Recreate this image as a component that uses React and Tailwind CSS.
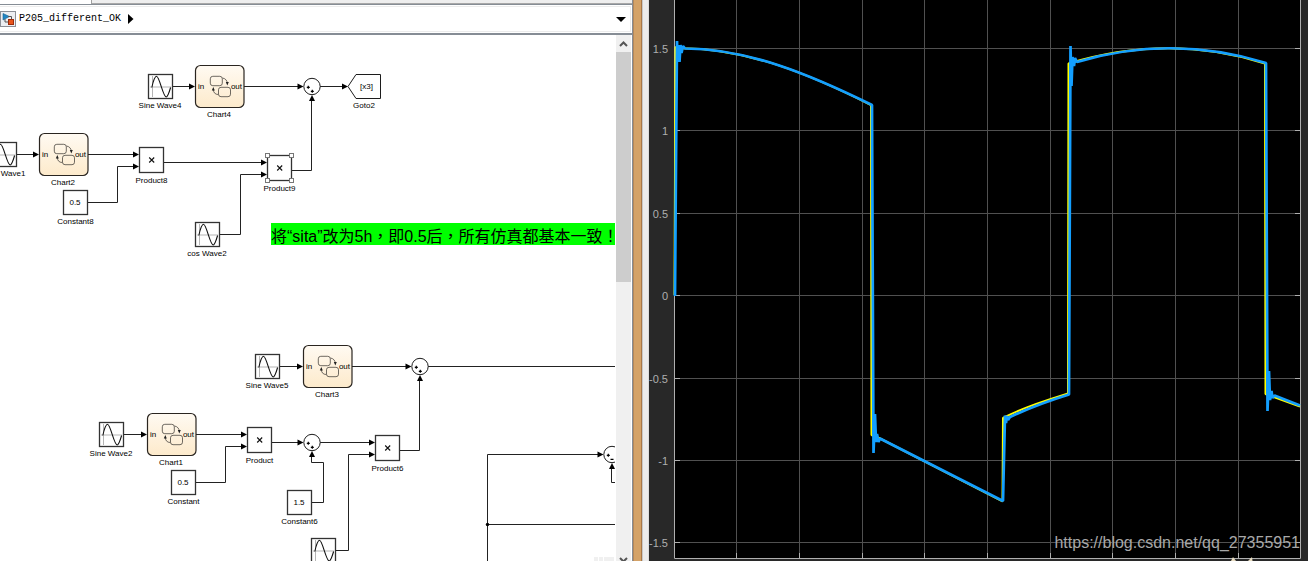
import { clsx } from "clsx";

const sineBlocks = [
  { x: 148, y: 74, label: "Sine Wave4" },
  { x: -8, y: 142, label: "Sine Wave1" },
  { x: 195, y: 222, label: "cos Wave2" },
  { x: 255, y: 354, label: "Sine Wave5" },
  { x: 99, y: 422, label: "Sine Wave2" },
  { x: 311, y: 538 },
];

const chartBlocks = [
  { x: 195, y: 65, label: "Chart4" },
  { x: 39, y: 133, label: "Chart2" },
  { x: 303, y: 345, label: "Chart3" },
  { x: 147, y: 413, label: "Chart1" },
];

const productBlocks = [
  { x: 139, y: 147, label: "Product8" },
  { x: 267, y: 155, label: "Product9", selected: true },
  { x: 247, y: 427, label: "Product" },
  { x: 375, y: 435, label: "Product6" },
];

const constantBlocks = [
  { x: 63, y: 190, value: "0.5", label: "Constant8" },
  { x: 171, y: 470, value: "0.5", label: "Constant" },
  { x: 287, y: 490, value: "1.5", label: "Constant6" },
];

const sumBlocks = [
  { x: 312, y: 86.5 },
  { x: 420, y: 366.5 },
  { x: 312, y: 442.5 },
  { x: 612, y: 454.5, minus: true },
];

// dir is the direction of the arrow head, placed on the last point
const wires = [
  { d: "M172 86.5H190", tip: [195, 86.5], dir: "right" },
  { d: "M244 86.5H298", tip: [303.5, 86.5], dir: "right" },
  { d: "M320 86.5H342", tip: [348, 86.5], dir: "right" },
  { d: "M16 154.5H34", tip: [39, 154.5], dir: "right" },
  { d: "M88 154.5H134", tip: [139, 154.5], dir: "right" },
  { d: "M88 202.5H117.5V166.5H134", tip: [139, 166.5], dir: "right" },
  { d: "M164 162.5H262", tip: [267, 162.5], dir: "right" },
  { d: "M220 234.5H240.5V174.5H262", tip: [267, 174.5], dir: "right" },
  { d: "M292 170.5H311.5V100", tip: [312, 95], dir: "up" },
  { d: "M280 366.5H298", tip: [303, 366.5], dir: "right" },
  { d: "M352 366.5H406", tip: [411.5, 366.5], dir: "right" },
  { d: "M428 366.5H615" },
  { d: "M124 434.5H142", tip: [147, 434.5], dir: "right" },
  { d: "M196 434.5H242", tip: [247, 434.5], dir: "right" },
  { d: "M196 482.5H225.5V446.5H242", tip: [247, 446.5], dir: "right" },
  { d: "M272 442.5H298", tip: [303.5, 442.5], dir: "right" },
  { d: "M312 502.5H323.5V462.5H311.5V456", tip: [312, 451], dir: "up" },
  { d: "M320 442.5H370", tip: [375, 442.5], dir: "right" },
  { d: "M336 550.5H348.5V454.5H370", tip: [375, 454.5], dir: "right" },
  { d: "M400 450.5H419.5V380", tip: [420, 375], dir: "up" },
  { d: "M487.5 561V454.5H598", tip: [603.5, 454.5], dir: "right" },
  { d: "M487 524.5H615" },
  { d: "M615 482.5H611.5V468", tip: [612, 463], dir: "up" },
];

const labelClass =
  "fill-black text-[8px] font-['Liberation_Sans',Arial,sans-serif]";

const Label = ({ x, y, children, anchor = "middle" }) => (
  <text x={x} y={y} textAnchor={anchor} className={labelClass}>
    {children}
  </text>
);

const ArrowHead = ({ tip, dir }) => {
  const [x, y] = tip;
  const points =
    dir === "right"
      ? `${x},${y} ${x - 6},${y - 3} ${x - 6},${y + 3}`
      : `${x},${y} ${x - 3},${y + 6} ${x + 3},${y + 6}`;
  return <polygon points={points} className="fill-black" />;
};

const SineBlock = ({ x, y, label }) => (
  <g transform={`translate(${x} ${y})`}>
    <rect x="0.5" y="0.5" width="24" height="24" fill="#fff" stroke="#333" strokeWidth="1.3" />
    <path d="M4.5 2V23M2 13H23" stroke="#b5b5b5" fill="none" />
    <path
      d="M3.8 13.5C5.5 6 7 2.3 8.5 2.3C11.5 2.3 15 23 18.2 23C19.8 23 21 19 22.6 13.5"
      stroke="#111"
      strokeWidth="1.1"
      fill="none"
    />
    {label && <Label x={12} y={34}>{label}</Label>}
  </g>
);

const ChartBlock = ({ x, y, label }) => (
  <g transform={`translate(${x} ${y})`}>
    <rect
      x="0.5"
      y="0.5"
      width="48.5"
      height="42"
      rx="5"
      fill="url(#chartFill)"
      stroke="#2a2520"
      strokeWidth="1.2"
    />
    <g fill="none" stroke="#4a4640" strokeWidth="0.8">
      <rect x="15.3" y="11.3" width="12" height="9.4" rx="2.5" />
      <rect x="23.5" y="22.3" width="12" height="9.4" rx="2.5" />
      <path d="M27.5 13C30.5 13.5 32 15.5 32.3 18" />
      <path d="M23.3 29.5C20 29.5 18.5 27.5 18.3 24.5" />
    </g>
    <path d="M30.8 17H33.8L32.3 20.6ZM16.8 25.6H19.8L18.3 22Z" fill="#222" />
    <Label x={3} y={24} anchor="start">in</Label>
    <Label x={47} y={24} anchor="end">out</Label>
    <Label x={24} y={52}>{label}</Label>
  </g>
);

const ProductBlock = ({ x, y, label, selected }) => (
  <g transform={`translate(${x} ${y})`}>
    <rect x="0.5" y="0.5" width="24" height="25" fill="#fff" stroke="#333" strokeWidth="1.3" />
    <path d="M10.2 10.5L15.2 15.5M15.2 10.5L10.2 15.5" stroke="#111" strokeWidth="1.1" />
    {selected && (
      <g fill="#fff" stroke="#777">
        <rect x="-1.5" y="-1.5" width="4" height="4" />
        <rect x="22.5" y="-1.5" width="4" height="4" />
        <rect x="-1.5" y="23.5" width="4" height="4" />
        <rect x="22.5" y="23.5" width="4" height="4" />
      </g>
    )}
    <Label x={12.5} y={36}>{label}</Label>
  </g>
);

const ConstantBlock = ({ x, y, value, label }) => (
  <g transform={`translate(${x} ${y})`}>
    <rect x="0.5" y="0.5" width="24" height="24" fill="#fff" stroke="#333" strokeWidth="1.3" />
    <Label x={12} y={15}>{value}</Label>
    <Label x={12.5} y={34}>{label}</Label>
  </g>
);

const SumBlock = ({ x, y, minus }) => (
  <g transform={`translate(${x} ${y})`}>
    <circle r="8.2" fill="#fff" stroke="#1c1c1c" />
    <path
      d={
        minus
          ? "M-5.2 0.8H-2.2M-3.7 -0.7V2.3M-1.5 4.8H1.5"
          : "M-5.2 0.8H-2.2M-3.7 -0.7V2.3M-1.2 4.8H1.8M0.3 3.3V6.3"
      }
      stroke="#000"
      strokeWidth="1.2"
    />
  </g>
);

const Diagram = () => (
  <svg width="615" height="526" viewBox="0 35 615 526" className="block max-w-none">
    <defs>
      <linearGradient id="chartFill" x1="0" y1="0" x2="0" y2="1">
        <stop offset="0" stopColor="#fffaf2" />
        <stop offset="1" stopColor="#fdeacb" />
      </linearGradient>
    </defs>
    {wires.map((wire) => (
      <path key={wire.d} d={wire.d} fill="none" stroke="#222" />
    ))}
    {sineBlocks.map((block) => (
      <SineBlock key={`${block.x}-${block.y}`} {...block} />
    ))}
    {chartBlocks.map((block) => (
      <ChartBlock key={block.label} {...block} />
    ))}
    {productBlocks.map((block) => (
      <ProductBlock key={block.label} {...block} />
    ))}
    {constantBlocks.map((block) => (
      <ConstantBlock key={block.label} {...block} />
    ))}
    {sumBlocks.map((block) => (
      <SumBlock key={`${block.x}-${block.y}`} {...block} />
    ))}
    {wires
      .filter((wire) => wire.tip)
      .map((wire) => (
        <ArrowHead key={wire.d} tip={wire.tip} dir={wire.dir} />
      ))}
    <polygon
      points="348,86.5 356,74.5 380.5,74.5 380.5,98.5 356,98.5"
      fill="#fff"
      stroke="#1c1c1c"
    />
    <Label x={366.5} y={89}>[x3]</Label>
    <Label x={364} y={108}>Goto2</Label>
    <circle cx="487.5" cy="524.5" r="1.7" />
    <path d="M594 557h4v4h-4zM599 557h4v4h-4zM604 557h10v4h-10z" fill="#f0f0f0" />
  </svg>
);

const Chevron = ({ up }) => (
  <svg width="9" height="6" viewBox="0 0 9 6" className="block shrink-0">
    <path
      d={up ? "M1 5L4.5 1.5L8 5" : "M1 1L4.5 4.5L8 1"}
      fill="none"
      stroke="#555"
      strokeWidth="2"
    />
  </svg>
);

const ModelWindow = () => (
  <section className="flex min-w-0 flex-col overflow-hidden border-r border-[#868d95] bg-white">
    <div className="flex h-[5px] shrink-0 border-b border-[#868d95]">
      <div className="w-[92px] border-r border-[#a0a0a0] bg-white" />
      <div className="flex-1 border-b border-[#a8a8a8] bg-[#eeeeee]" />
    </div>

    {/* Breadcrumb bar */}
    <div className="flex h-7 shrink-0 p-px pl-0">
      <div className="flex flex-1 items-center justify-between border-y border-r border-[#ececec] pr-1">
        <a href="#model" className="flex items-center gap-[3px]">
          <svg width="16" height="16" viewBox="0 0 16 16" className="block">
            <rect x="0.5" y="0.5" width="15" height="15" fill="#eceef2" stroke="#8c8f96" />
            <path d="M3 2.5L9.5 5.5L3 9Z" fill="#2186c4" stroke="#17638f" strokeWidth="0.6" />
            <path d="M8 5.5H11.5V8.5M5 8V11H9" fill="none" stroke="#555" />
            <rect x="8.5" y="8.5" width="5" height="5" fill="#e8541c" stroke="#9c2c0c" />
          </svg>
          <span className="font-['Liberation_Mono','Courier_New',monospace] text-[10px] leading-4 text-black">
            P205_different_OK
          </span>
          <svg width="6" height="10" viewBox="0 0 6 10" className="ml-1 block">
            <path d="M0 0L5.5 5L0 10Z" fill="#000" />
          </svg>
        </a>
        <button type="button" aria-label="History">
          <svg width="10" height="5" viewBox="0 0 10 5" className="block">
            <path d="M0 0H10L5 5Z" fill="#000" />
          </svg>
        </button>
      </div>
    </div>

    {/* Canvas and its scroll bar */}
    <div className="flex min-h-0 flex-1 border-t-2 border-[#868d95]">
      <div className="relative mr-px min-w-0 flex-1 overflow-hidden">
        <Diagram />
        <p className="absolute left-[271px] right-0 top-[188px] h-[22px] whitespace-nowrap bg-[#00ff00] pt-1 font-['Liberation_Sans','Noto_Sans_CJK_TC',sans-serif] text-base leading-5 text-black">
          将“sita”改为5h，即0.5后，所有仿真都基本一致！
        </p>
      </div>
      <div className="mr-px flex w-[15px] shrink-0 flex-col bg-[#f0f0f0]">
        <button
          type="button"
          aria-label="Scroll up"
          className="flex h-[17px] shrink-0 items-center justify-center"
        >
          <Chevron up />
        </button>
        <div className="h-[230px] bg-[#cdcdcd]" />
        <div className="flex-1" />
        <button
          type="button"
          aria-label="Scroll down"
          className="flex h-1 shrink-0 items-start justify-center overflow-hidden"
        >
          <Chevron />
        </button>
      </div>
    </div>
  </section>
);

const gridX = [736, 799, 862, 924, 987, 1050, 1112, 1175, 1238];
const gridY = [
  { y: 48, label: "1.5" },
  { y: 130, label: "1" },
  { y: 213, label: "0.5" },
  { y: 295, label: "0" },
  { y: 378, label: "-0.5" },
  { y: 460, label: "-1" },
  { y: 542, label: "-1.5" },
];

const traces = [
  {
    name: "reference",
    color: "#ffff00",
    width: 2,
    d: "M674.5 295L675.5 47L681 48.3C748 48.3 811 75 871 105L871.5 435L880 438.5L1002.5 501.3L1003 418C1026 406 1047 400 1068 393.5L1068.5 63.5C1136 43 1202 43.5 1265 63.5L1265.5 394L1300 406.5",
  },
  {
    name: "measured",
    color: "#139fff",
    width: 2.7,
    d: "M675 296L676.5 100L677 41L677.5 62L679 45L679.5 62L680.5 45L681.5 53L683 46L685 48.5C748 48.5 811 75 872 105L873.5 453L875 414L876 442L877 434L878.5 442L880 438.5L1003 501L1005 415.5L1006 423L1007 416L1008 420L1010 417C1028 408.5 1048 401 1069 394.5L1070.5 46L1071.5 86L1072.500 57L1074 66L1075 58L1077 62C1138 43.5 1204 43.5 1266 63L1267.5 411L1269 371L1270 400L1271.500 391L1272.500 398L1274.5 395.5L1300 405.5",
  },
];

const Scope = () => (
  <section className="relative min-w-0 overflow-hidden bg-[#282828]">
    <svg
      viewBox="649 0 659 561"
      preserveAspectRatio="xMinYMin slice"
      className="block h-full w-full"
    >
      <rect x="674" y="-1" width="627" height="560" fill="#000" />
      <g stroke="#505050">
        {gridX.map((x) => (
          <path key={x} d={`M${x + 0.5} 0V558`} />
        ))}
        {gridY.map(({ y }) => (
          <path key={y} d={`M675 ${y + 0.5}H1300`} />
        ))}
      </g>
      <g stroke="#afafaf" fill="none">
        {gridX.map((x) => (
          <path key={x} d={`M${x + 0.5} 553V558`} />
        ))}
        {gridY.map(({ y }) => (
          <path key={y} d={`M674 ${y + 0.5}H680M1295 ${y + 0.5}H1300`} />
        ))}
        <path d="M674.5 0V558.5H1300.5V0" />
      </g>
      {gridY.map(({ y, label }) => (
        <text
          key={label}
          x="668"
          y={y + 5}
          textAnchor="end"
          className="fill-[#afafaf] font-['Liberation_Sans',Arial,sans-serif] text-[11px]"
        >
          {label}
        </text>
      ))}
      {traces.map((trace) => (
        <path
          key={trace.name}
          d={trace.d}
          fill="none"
          stroke={trace.color}
          strokeWidth={trace.width}
          strokeLinejoin="bevel"
        />
      ))}
      <path d="M1231 561L1233 557L1236 561M1248 561L1252 557L1252.5 561" fill="#e8dcc0" />
    </svg>
    <span
      className={clsx(
        "absolute bottom-2 right-2 whitespace-nowrap text-base leading-5 text-[#a8a8a8]",
        "font-['Liberation_Sans',Arial,sans-serif]"
      )}
    >
      https://blog.csdn.net/qq_27355951
    </span>
  </section>
);

export default function App() {
  return (
    <main className="grid h-screen grid-cols-[minmax(0,633fr)_16px_minmax(0,659fr)] overflow-hidden bg-white">
      <ModelWindow />
      {/* Window frame between the two applications */}
      <div className="flex">
        <div className="w-[9px] border-x border-l-[#b5885a] border-r-[#a87848] bg-[#d4a267]" />
        <div className="flex-1 border-x border-l-[#c8c8c8] border-r-[#dcdcdc] bg-[#ececec]" />
      </div>
      <Scope />
    </main>
  );
}
